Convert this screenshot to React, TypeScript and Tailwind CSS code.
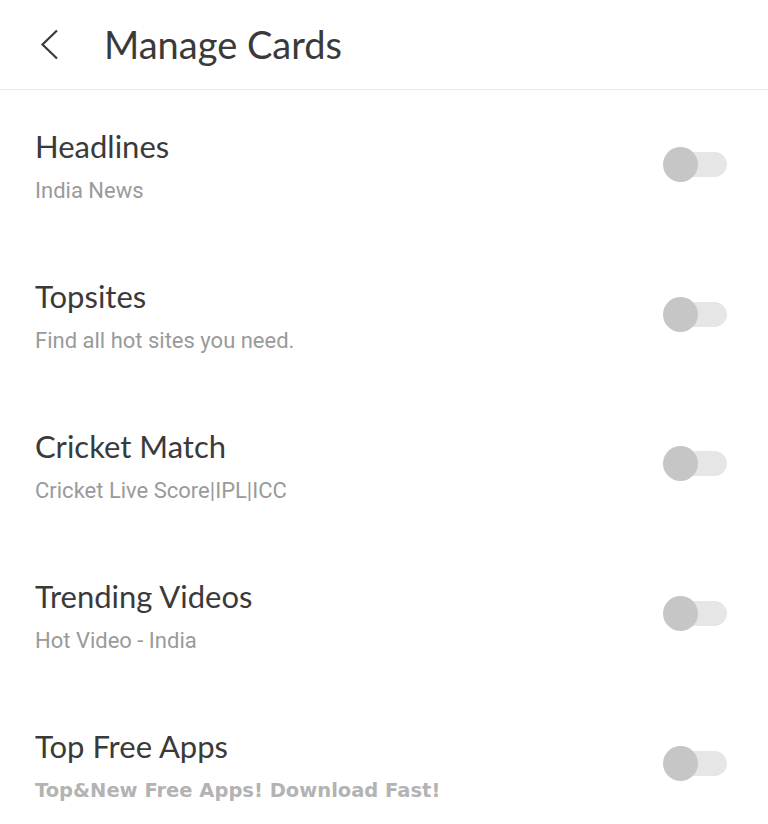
import React from "react";

const rows = [
  { title: "Headlines", sub: "India News" },
  { title: "Topsites", sub: "Find all hot sites you need." },
  { title: "Cricket Match", sub: "Cricket Live Score|IPL|ICC" },
  { title: "Trending Videos", sub: "Hot Video - India" },
  { title: "Top Free Apps", sub: "Top&New Free Apps! Download Fast!", bold: true },
];

function Toggle() {
  return (
    <div className="relative w-[64px] h-[36px] shrink-0">
      <div className="absolute left-[2px] right-0 top-[5px] h-[25px] rounded-full bg-[#e6e6e6]" />
      <div className="absolute left-0 top-0 w-[35px] h-[35px] rounded-full bg-[#c6c6c6]" />
    </div>
  );
}

export default function App() {
  return (
    <div className="w-[768px] h-[824px] bg-white overflow-hidden" style={{ fontFamily: "Lato, 'Noto Sans', sans-serif" }}>
      <div className="h-[90px] flex items-center border-b border-[#e8e8e8]">
        <div className="w-[104px] pl-[40px] flex items-center">
          <svg width="19" height="31" viewBox="0 0 19 31" fill="none">
            <path d="M17 1.5 L2.5 15.5 L17 29.5" stroke="#3a3a3a" strokeWidth="2.2" />
          </svg>
        </div>
        <div className="text-[38px] leading-none text-[#3a3a3a] mt-[-2px]">Manage Cards</div>
      </div>
      <div className="flex flex-col">
        {rows.map((r) => (
          <div key={r.title} className="h-[149.75px] flex items-center pl-[35px] pr-[41px]">
            <div className="flex-1 flex flex-col mt-[4px]">
              <div className="text-[31px] leading-none text-[#3a3a3a]">{r.title}</div>
              {r.bold ? (
                <div
                  className="text-[19.5px] leading-none font-bold text-[#b3b3b3] mt-[19px]"
                  style={{ fontFamily: "'DejaVu Sans', Verdana, sans-serif" }}
                >
                  {r.sub}
                </div>
              ) : (
                <div
                  className="text-[22px] leading-none text-[#9a9a9a] mt-[18px]"
                  style={{ fontFamily: "Roboto, sans-serif" }}
                >
                  {r.sub}
                </div>
              )}
            </div>
            <Toggle />
          </div>
        ))}
      </div>
    </div>
  );
}
